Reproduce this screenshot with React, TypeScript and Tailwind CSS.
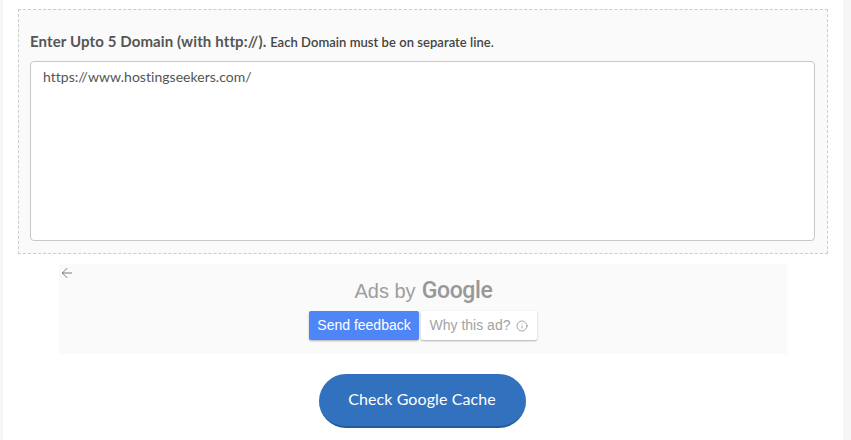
import { ArrowLeft, Info } from 'lucide-react';

const App = () => {
  return (
    <div className="h-[440px] w-[851px] overflow-hidden bg-[#f6f6f6] font-['Lato','Open_Sans',sans-serif]">
      <div className="ml-[3px] h-[440px] w-[840px] bg-white px-[15px] pt-[9px]">
        {/* Domain form */}
        <div className="h-[245px] w-[810px] border border-dashed border-[#cccccc] bg-[#fafafa] px-[11px] pt-[21px]">
          <p className="h-[30px] text-[15px] leading-[20px] font-bold tracking-[0.12px] whitespace-nowrap text-[#555555]">
            Enter Upto 5 Domain (with http://).{' '}
            <span className="text-[13px] font-semibold tracking-[0.04px] text-[#444444]">Each Domain must be on separate line.</span>
          </p>
          <textarea
            readOnly
            className="h-[180px] w-[785px] resize-none rounded-[4px] border border-[#c8c8c8] bg-white px-[12px] py-[5px] text-[14px] leading-[20px] tracking-[0.03px] text-[#555555] outline-none"
            value="https://www.hostingseekers.com/"
          />
        </div>

        {/* Ad block */}
        <div className="relative mt-[10px] ml-[41px] flex h-[90px] w-[728px] flex-col items-center bg-[#fafafa] pt-[13px] font-['Liberation_Sans',sans-serif]">
          <ArrowLeft className="absolute top-[1px] left-0 h-[16px] w-[16px] text-[#666666]" strokeWidth={1.25} />
          <div className="flex h-[28px] items-center gap-[6px] pl-[1px] text-[20px] text-[#9e9e9e]">
            <span>Ads by</span>
            <span className="font-['Roboto',sans-serif] text-[23px] font-medium tracking-[-0.35px] text-[#989898]">Google</span>
          </div>
          <div className="mt-[6px] flex gap-[2px] text-[14px]">
            <div className="flex h-[29px] w-[110px] items-center justify-center rounded-[2px] bg-[#4f86f7] text-white shadow-[0_1px_2px_rgba(0,0,0,0.3)]">
              Send feedback
            </div>
            <div className="flex h-[29px] w-[116px] items-center justify-center gap-[6px] rounded-[2px] bg-white text-[#a3a3a3] shadow-[0_1px_2px_rgba(0,0,0,0.3)]">
              Why this ad?
              <Info className="h-[12px] w-[12px] text-[#888888]" strokeWidth={1.5} />
            </div>
          </div>
        </div>

        {/* Submit */}
        <div className="mt-[20px] ml-[-2px] flex justify-center">
          <button className="h-[54px] w-[207px] rounded-[27px] border-b-2 border-[#255b9b] bg-[#3271bd] pb-[2px] text-[16px] tracking-[0.1px] text-white">
            Check Google Cache
          </button>
        </div>
      </div>
    </div>
  );
};

export default App;
